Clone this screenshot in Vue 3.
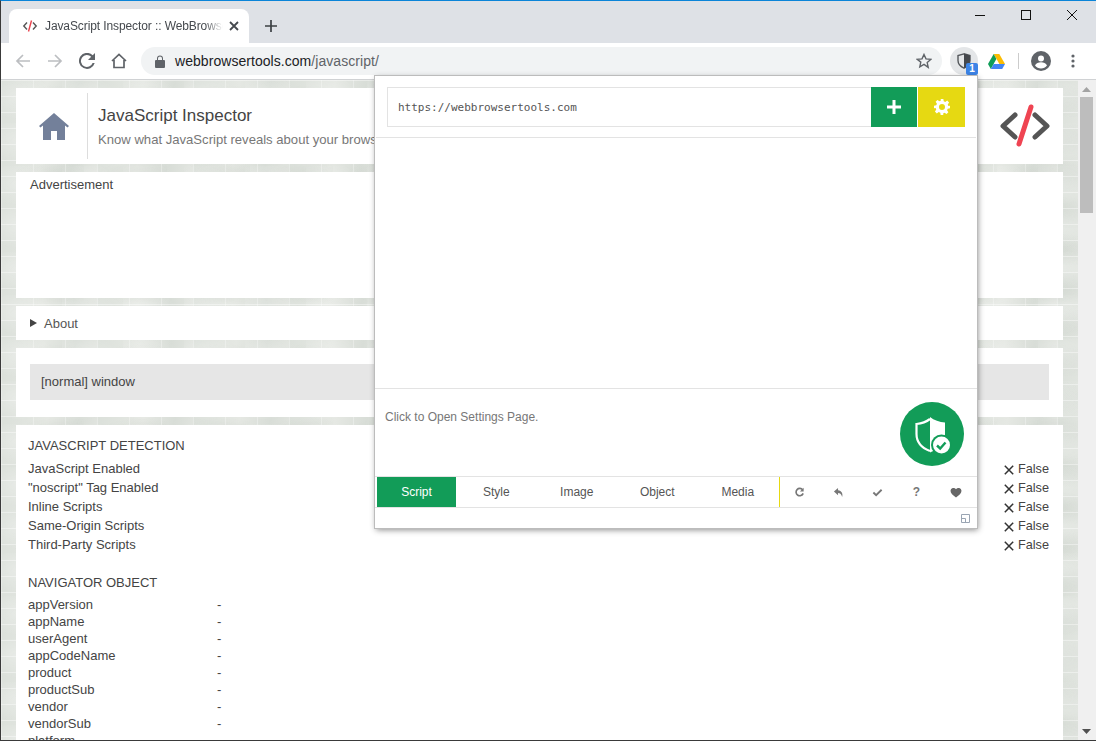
<script setup>
const tabs = ['Script', 'Style', 'Image', 'Object', 'Media']
const detection = ['JavaScript Enabled', '"noscript" Tag Enabled', 'Inline Scripts', 'Same-Origin Scripts', 'Third-Party Scripts']
const nav = ['appVersion', 'appName', 'userAgent', 'appCodeName', 'product', 'productSub', 'vendor', 'vendorSub', 'platform']
</script>

<template>
  <div class="window">
    <div class="tabstrip">
      <div class="tab">
        <svg class="fav" width="16" height="16" viewBox="0 0 16 16" fill="none" stroke-width="1.4">
          <path d="M5 4.500 1.800 8 5 11.500M11 4.500 14.200 8 11 11.500" stroke="#555" />
          <path d="M9.500 2.500 6.500 13.500" stroke="#e8434c" />
        </svg>
        <span class="tabtitle">JavaScript Inspector :: WebBrowserTools</span>
        <svg class="tabx" width="10" height="10" viewBox="0 0 10 10"><path d="M1 1l8 8M9 1l-8 8" stroke="#45494e" stroke-width="1.800" /></svg>
      </div>
      <svg class="newtab" width="12" height="12" viewBox="0 0 12 12"><path d="M6 0v12M0 6h12" stroke="#3c4043" stroke-width="1.700" /></svg>
      <div class="winctl">
        <svg width="46" height="28" viewBox="0 0 46 28"><path d="M18 14.500h10" stroke="#111" /></svg>
        <svg width="46" height="28" viewBox="0 0 46 28"><rect x="18.500" y="9.500" width="9" height="9" fill="none" stroke="#111" /></svg>
        <svg width="46" height="28" viewBox="0 0 46 28"><path d="M18 9l10 10M28 9 18 19" stroke="#111" /></svg>
      </div>
    </div>

    <div class="toolbar">
      <svg class="tb first" width="16" height="16" viewBox="0 0 16 16" fill="none" stroke="#bcbec1" stroke-width="1.700"><path d="M15 8H2M8 2 2 8l6 6" /></svg>
      <svg class="tb" width="16" height="16" viewBox="0 0 16 16" fill="none" stroke="#bcbec1" stroke-width="1.700"><path d="M1 8h13M8 2l6 6-6 6" /></svg>
      <svg class="tb" width="16" height="16" viewBox="0 0 16 16"><path d="M13.700 2.300A8 8 0 1 0 15.700 10h-2.100A6 6 0 1 1 12.200 3.800L9 7h7V0z" fill="#5f6368" /></svg>
      <svg class="tb" width="16" height="16" viewBox="0 0 16 16" fill="none" stroke="#5f6368" stroke-width="1.700"><path d="M1 8l7-6.500L15 8M3 7v7.500h10V7" /></svg>
      <div class="omnibox">
        <svg width="10" height="13" viewBox="0 0 10 13"><path d="M1 5h1V3.500a3 3 0 0 1 6 0V5h1a1 1 0 0 1 1 1v6a1 1 0 0 1-1 1H1a1 1 0 0 1-1-1V6a1 1 0 0 1 1-1zm2 0h4V3.500a2 2 0 0 0-4 0z" fill="#5f6368" /></svg>
        <span class="url">webbrowsertools.com<span class="path">/javascript/</span></span>
        <svg class="star" width="16" height="16" viewBox="0 0 16 16" fill="none" stroke="#5f6368" stroke-width="1.400"><path d="M8 1.500l2 4.400 4.800.5-3.600 3.200 1 4.700L8 11.400l-4.200 2.400 1-4.700L1.200 6.400 6 5.900z" /></svg>
      </div>
      <div class="ext">
        <svg width="14" height="16" viewBox="0 0 14 16">
          <path d="M7 .8 1 2.600V7.500c0 3.500 2.500 6 6 7.700 3.500-1.700 6-4.200 6-7.700V2.600z" fill="none" stroke="#55585c" stroke-width="1.400" />
          <path d="M7 .8l6 1.800v4.900c0 3.500-2.500 6-6 7.700z" fill="#45484c" />
        </svg>
        <span class="badge">1</span>
      </div>
      <svg class="drive" width="17" height="15" viewBox="0 0 17 15">
        <path d="M5.700 0h5.600l5.700 10h-5.600z" fill="#fbbc04" />
        <path d="M5.700 0 0 10l2.800 5 5.600-10z" fill="#0f9d58" />
        <path d="M2.800 15h11.400l2.800-5H5.700z" fill="#4285f4" />
      </svg>
      <span class="sep"></span>
      <svg class="avatar" width="20" height="20" viewBox="0 0 20 20">
        <circle cx="10" cy="10" r="10" fill="#5f6368" />
        <circle cx="10" cy="7.500" r="3" fill="#fff" />
        <path d="M4 14.500c1-2.500 3.500-3.300 6-3.300s5 .8 6 3.300a7.500 7.500 0 0 1-12 0z" fill="#fff" />
      </svg>
      <svg class="dots" width="4" height="14" viewBox="0 0 4 14" fill="#5f6368"><circle cx="2" cy="2" r="1.600" /><circle cx="2" cy="7" r="1.600" /><circle cx="2" cy="12" r="1.600" /></svg>
    </div>

    <div class="page">
      <div class="content">
        <header class="card head">
          <div class="homebox">
            <svg width="32" height="28" viewBox="0 0 32 28"><path d="M16 1 1 14l1.500 1.600L5 13.500V28h8v-9h6v9h8V13.500l2.500 2.100L31 14z" fill="#73809a" /></svg>
          </div>
          <div class="headtext">
            <div class="h1">JavaScript Inspector</div>
            <div class="h2">Know what JavaScript reveals about your browser</div>
          </div>
          <svg class="code" width="50" height="44" viewBox="0 0 50 44" fill="none" stroke-linecap="round" stroke-linejoin="round">
            <path d="M15 11 3 22l12 11M35 11l12 11-12 11" stroke="#555" stroke-width="5" />
            <path d="M31 3 19 40" stroke="#ef4452" stroke-width="5" />
          </svg>
        </header>
        <section class="card ad">Advertisement</section>
        <section class="card about"><span class="tri"></span>About</section>
        <section class="card mode"><div class="modebar">[normal] window</div></section>
        <section class="card data">
          <h2>JAVASCRIPT DETECTION</h2>
          <div class="det" v-for="d in detection" :key="d">
            <span>{{ d }}</span>
            <span class="false"><svg width="10" height="10" viewBox="0 0 10 10"><path d="M.8.8l8.400 8.400M9.200.8.800 9.200" stroke="#333" stroke-width="1.500" /></svg>False</span>
          </div>
          <h2 class="second">NAVIGATOR OBJECT</h2>
          <div class="navrow" v-for="n in nav" :key="n"><span class="navkey">{{ n }}</span><span>-</span></div>
        </section>
      </div>
      <div class="scrollbar">
        <svg width="9" height="5" viewBox="0 0 9 5"><path d="M4.500 0 9 5H0z" fill="#a3a3a3" /></svg>
        <div class="thumb"></div>
        <svg class="down" width="9" height="5" viewBox="0 0 9 5"><path d="M0 0h9L4.500 5z" fill="#505050" /></svg>
      </div>

      <div class="popup">
        <div class="popbar">
          <div class="urlbox">https://webbrowsertools.com</div>
          <button class="sq green">
            <svg width="14" height="14" viewBox="0 0 14 14"><path d="M7 0v14M0 7h14" stroke="#fff" stroke-width="3" /></svg>
          </button>
          <button class="sq yellow">
            <svg width="16" height="16" viewBox="0 0 24 24"><path d="M10 0h4l.6 3.400 2.300 1 2.900-2 2.800 2.800-2 2.900 1 2.300L24 10v4l-3.400.6-1 2.300 2 2.900-2.800 2.800-2.900-2-2.300 1L14 24h-4l-.6-3.400-2.300-1-2.900 2-2.800-2.800 2-2.900-1-2.300L0 14v-4l3.400-.6 1-2.300-2-2.900 2.800-2.800 2.900 2 2.300-1zM12 7.500a4.500 4.500 0 1 0 0 9 4.500 4.500 0 0 0 0-9z" fill="#fff" fill-rule="evenodd" /></svg>
          </button>
        </div>
        <div class="popempty"></div>
        <div class="popinfo">
          <span class="hint">Click to Open Settings Page.</span>
          <div class="bigicon">
            <svg width="64" height="64" viewBox="0 0 64 64">
              <path d="M30 17c-4 3-9 4.500-13.500 5V32c0 8 5.500 14 13.500 17" fill="none" stroke="#fff" stroke-width="2.200" />
              <path d="M30 15c4 3.300 9.500 5 15 5.500V32c0 8-6 14.500-15 18.500z" fill="#fff" />
              <circle cx="41.500" cy="43" r="10.500" fill="#129c58" />
              <circle cx="41.500" cy="43" r="8.500" fill="#fff" />
              <path d="M37 43.500l3.200 3 5.300-6" fill="none" stroke="#129c58" stroke-width="2.400" />
            </svg>
          </div>
        </div>
        <div class="tabs">
          <button v-for="(t, i) in tabs" :key="t" class="ptab" :class="{ on: i === 0 }">{{ t }}</button>
          <div class="tools">
            <svg width="11" height="11" viewBox="0 0 12 12" fill="none" stroke="#777" stroke-width="1.800"><path d="M9.500 3.200A4 4 0 1 0 10 7" /><path d="M10.500 .8v4h-4z" fill="#777" stroke="none" /></svg>
            <svg width="11" height="11" viewBox="0 0 12 12"><path d="M5.500 1 1 5l4.500 4V6.500c2 0 3.500.8 4.500 4.500 1-4-.5-7-4.500-7.500z" fill="#777" /></svg>
            <svg width="11" height="11" viewBox="0 0 12 12" fill="none" stroke="#777" stroke-width="2"><path d="M1.500 6l3 3 6-6" /></svg>
            <span class="q">?</span>
            <svg width="12" height="11" viewBox="0 0 13 12"><path d="M6.500 11.500C3 9 .5 7 .5 4.200A3.300 3.300 0 0 1 6.500 2.500a3.300 3.300 0 0 1 6 1.700c0 2.800-2.500 4.800-6 7.300z" fill="#666" /></svg>
          </div>
        </div>
        <div class="popfoot">
          <svg width="9" height="9" viewBox="0 0 9 9" fill="none" stroke="#9aa5b3"><path d="M.5.500h8v8h-8zM.5 4.500h4v4" /></svg>
        </div>
      </div>
    </div>
  </div>
</template>

<style scoped>
.window {
  width: 1096px;
  height: 741px;
  box-sizing: border-box;
  border-left: 1px solid #3a3a3a;
  border-top: 1px solid #0a84d8;
  border-bottom: 1px solid #3a3a3a;
  display: flex;
  flex-direction: column;
  overflow: hidden;
  font-family: "Liberation Sans", Arial, sans-serif;
  color: #444;
}
.tabstrip {
  height: 42px;
  flex: none;
  background: #dee1e6;
  display: flex;
  align-items: flex-end;
  position: relative;
}
.tab {
  margin-left: 8px;
  width: 240px;
  height: 34px;
  background: #fff;
  border-radius: 8px 8px 0 0;
  display: flex;
  align-items: center;
  padding: 0 10px 0 13px;
  box-sizing: border-box;
}
.fav { flex: none; }
.tabtitle {
  margin-left: 7px;
  flex: 1;
  font-size: 12px;
  letter-spacing: -.1px;
  color: #45494e;
  white-space: nowrap;
  overflow: hidden;
  -webkit-mask-image: linear-gradient(to right, #000 90%, transparent);
  mask-image: linear-gradient(to right, #000 90%, transparent);
}
.tabx { flex: none; margin-left: 6px; }
.newtab { margin: 0 0 11px 16px; }
.winctl {
  position: absolute;
  top: 0;
  right: 1px;
  display: flex;
}
.toolbar {
  height: 37px;
  flex: none;
  background: #fff;
  border-bottom: 1px solid #d0d2d4;
  display: flex;
  align-items: center;
  box-sizing: border-box;
}
.tb { flex: none; margin-left: 16px; }
.tb.first { margin-left: 14px; }
.omnibox {
  margin-left: 14px;
  width: 801px;
  height: 28px;
  border-radius: 14px;
  background: #f1f3f4;
  display: flex;
  align-items: center;
  padding: 0 10px 0 14px;
  box-sizing: border-box;
}
.url {
  margin-left: 10px;
  font-size: 14px;
  letter-spacing: .05px;
  color: #202124;
  flex: 1;
}
.path { color: #5f6368; }
.ext {
  margin-left: 8px;
  width: 28px;
  height: 28px;
  border-radius: 14px;
  background: #e4e6e8;
  display: flex;
  align-items: center;
  justify-content: center;
  position: relative;
}
.badge {
  position: absolute;
  right: 0;
  bottom: 0;
  width: 12px;
  height: 12px;
  border-radius: 2px;
  background: #3d84e6;
  color: #fff;
  font-size: 10px;
  font-weight: 700;
  line-height: 12px;
  text-align: center;
}
.drive { margin-left: 10px; flex: none; }
.sep { width: 1px; height: 16px; background: #ccc; margin-left: 13px; }
.avatar { margin-left: 12px; flex: none; }
.dots { margin-left: 20px; flex: none; }

.page {
  flex: 1;
  min-height: 0;
  position: relative;
  display: flex;
  background-color: #dfe3de;
  background-image:
    linear-gradient(rgba(255, 255, 255, .4) 1px, transparent 1px),
    linear-gradient(90deg, rgba(255, 255, 255, .3) 1px, transparent 1px),
    radial-gradient(ellipse at 30% 40%, rgba(255, 255, 255, .28), transparent 60%),
    radial-gradient(ellipse at 70% 60%, rgba(160, 170, 160, .16), transparent 55%),
    linear-gradient(100deg, #dbe0da, #e5e8e3 45%, #d8ddd7 75%, #e3e6e1);
  background-size: 48px 16px, 32px 24px, 61px 43px, 83px 37px, 96px 48px;
}
.content {
  width: 1047px;
  margin: 8px 0 0 15px;
  display: flex;
  flex-direction: column;
  gap: 8px;
  flex: none;
}
.card { background: #fff; flex: none; }
.head {
  height: 76px;
  display: flex;
  align-items: center;
}
.homebox {
  width: 72px;
  height: 66px;
  box-sizing: border-box;
  padding-left: 4px;
  border-right: 1px solid #ddd;
  display: flex;
  align-items: center;
  justify-content: center;
}
.headtext { margin-left: 10px; flex: 1; padding-top: 3px; }
.h1 { font-size: 17px; color: #444; line-height: 20px; }
.h2 { font-size: 13.100px; color: #777; line-height: 20px; margin-top: 4px; }
.code { margin-right: 13px; flex: none; }
.ad {
  height: 126px;
  box-sizing: border-box;
  padding: 5px 14px;
  font-size: 13px;
  line-height: 16px;
}
.about {
  height: 34px;
  display: flex;
  align-items: center;
  padding-left: 14px;
  font-size: 13px;
  color: #555;
}
.tri {
  width: 0;
  height: 0;
  border-left: 7px solid #444;
  border-top: 4px solid transparent;
  border-bottom: 4px solid transparent;
  margin-right: 7px;
}
.mode { height: 69px; padding: 16px 14px 17px; box-sizing: border-box; }
.modebar {
  height: 36px;
  background: #e6e6e6;
  font-size: 13px;
  line-height: 36px;
  padding-left: 11px;
  color: #444;
}
.data { height: 320px; padding: 0 14px 0 12px; font-size: 13px; color: #444; }
h2 {
  margin: 0;
  padding-top: 13px;
  font-size: 13px;
  font-weight: 400;
  line-height: 16px;
  margin-bottom: 5px;
  color: #444;
}
h2.second { padding-top: 21px; margin-bottom: 5px; }
.det {
  height: 19px;
  line-height: 19px;
  display: flex;
  justify-content: space-between;
}
.false { display: inline-flex; align-items: center; gap: 4px; padding-top: 2px; font-size: 12.700px; }
.navrow { height: 17px; line-height: 17px; display: flex; }
.navkey { width: 189px; }

.scrollbar {
  position: absolute;
  top: 0;
  right: 0;
  bottom: 0;
  width: 18px;
  background: #f0f0f0;
  display: flex;
  flex-direction: column;
  align-items: center;
  padding: 7px 3px 6px 2px;
  box-sizing: border-box;
}
.thumb { width: 100%; height: 116px; background: #bdbdbd; margin-top: 5px; }
.down { margin-top: auto; }

.popup {
  position: absolute;
  left: 374px;
  top: -4px;
  width: 602px;
  height: 452px;
  background: #fff;
  box-shadow: 0 0 0 1px #bcbcbc, 1px 2px 6px rgba(0, 0, 0, .45);
  display: flex;
  flex-direction: column;
  align-items: stretch;
  box-sizing: border-box;
}
.popbar {
  height: 62px;
  flex: none;
  padding: 11px 11px 10px 11px;
  display: flex;
  border-bottom: 1px solid #e3e3e3;
  box-sizing: border-box;
  margin: 0 1px;
}
.urlbox {
  flex: 1;
  border: 1px solid #e3e3e3;
  border-right: none;
  font-family: "DejaVu Sans Mono", monospace;
  font-size: 11px;
  line-height: 39px;
  padding-left: 10px;
  color: #555;
}
.sq {
  width: 46px;
  height: 40px;
  border: none;
  padding: 0;
  display: flex;
  align-items: center;
  justify-content: center;
}
.green { background: #129c58; margin-right: 1px; }
.yellow { background: #e6d912; width: 47px; margin-right: 0; }
.popempty { height: 250px; flex: none; }
.popinfo {
  height: 89px;
  flex: none;
  border-top: 1px solid #e3e3e3;
  border-bottom: 1px solid #e3e3e3;
  display: flex;
  justify-content: space-between;
  box-sizing: border-box;
  padding: 13px 13px 0 10px;
}
.hint { font-size: 12px; color: #777; line-height: 30px; height: 30px; }
.bigicon {
  width: 64px;
  height: 64px;
  border-radius: 50%;
  background: #129c58;
}
.bigicon svg { display: block; }
.tabs {
  height: 31px;
  flex: none;
  display: flex;
  padding-left: 2px;
  border-bottom: 1px solid #e3e3e3;
  box-sizing: border-box;
}
.ptab {
  width: 80.500px;
  height: 30px;
  border: none;
  background: #fff;
  font: 12px "Liberation Sans", Arial, sans-serif;
  color: #555;
  padding: 0;
}
.ptab.on { background: #129c58; color: #fff; width: 79px; }
.tools {
  flex: 1;
  border-left: 1px solid #e6d912;
  margin-left: 1px;
  display: grid;
  grid-template-columns: repeat(5, 39px);
  align-items: center;
  justify-items: center;
}
.q { font-weight: 700; font-size: 12px; color: #777; }
.popfoot {
  flex: 1;
  display: flex;
  justify-content: flex-end;
  align-items: center;
  padding-right: 7px;
}
</style>

<style>
html, body { margin: 0; overflow: hidden; }
</style>
